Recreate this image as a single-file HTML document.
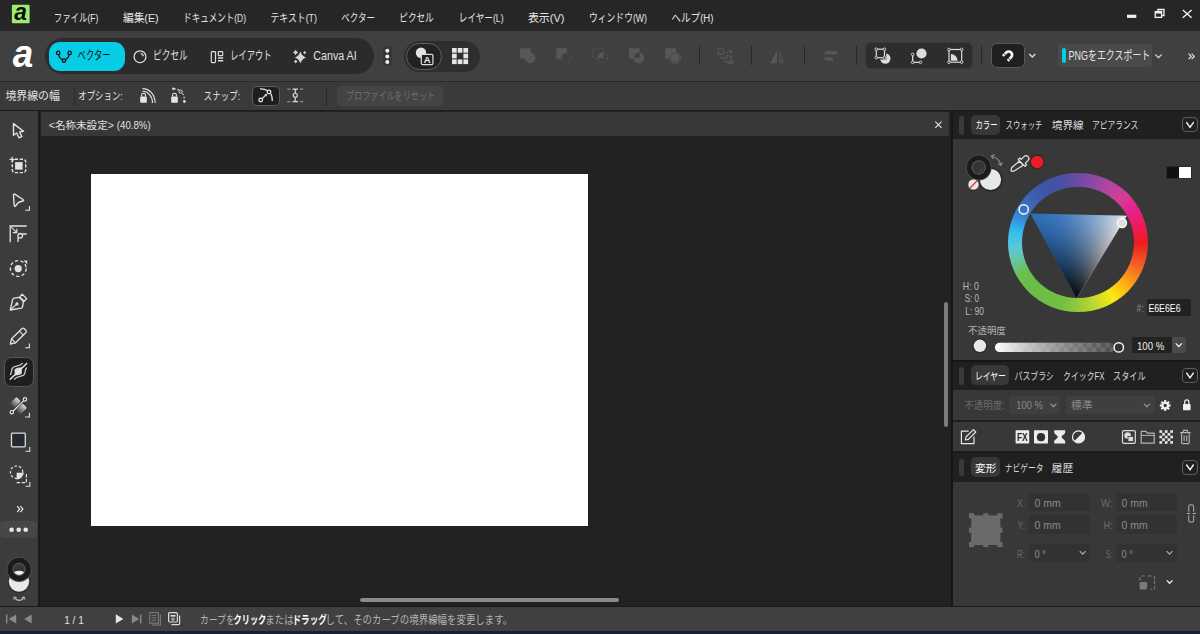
<!DOCTYPE html>
<html lang="ja">
<head>
<meta charset="utf-8">
<title>Affinity</title>
<style>
*{box-sizing:border-box;margin:0;padding:0}
html,body{width:1200px;height:634px;overflow:hidden;background:#222222}
body{position:relative;font-family:"Liberation Sans","Noto Sans CJK JP",sans-serif;font-size:12px;color:#e0e0e0}
.a{position:absolute}
svg{position:absolute;left:0;top:0;overflow:visible}
svg text{font-family:"Liberation Sans","Noto Sans CJK JP",sans-serif;white-space:pre}
#titlebar{left:0;top:0;width:1200px;height:31px;background:#262626}
#toolbar{left:0;top:31px;width:1200px;height:50px;background:#404040}
#tbline{left:0;top:81px;width:1200px;height:1.5px;background:#292929}
#context{left:0;top:82px;width:1200px;height:28px;background:#3a3a3a}
#tools{left:0;top:110.6px;width:38.1px;height:495.4px;background:#3c3c3c}
#doctab{left:40.5px;top:112.2px;width:908.7px;height:23.8px;background:#383838}
#canvas{left:40px;top:136px;width:912px;height:470px;background:#222222}
#page{left:90.8px;top:174.4px;width:496.8px;height:351.2px;background:#ffffff}
#right{left:953.3px;top:110px;width:246.7px;height:496px;background:#383838}
#status{left:0;top:607px;width:1200px;height:23.5px;background:#404040}
#statline{left:0;top:605.5px;width:1200px;height:1.5px;background:#1a1a1a}
#strip{left:0;top:630.5px;width:1200px;height:3.5px;background:#14213d}
.sep{width:1.3px;background:#272727}
.tabbar{left:0;width:246.7px;background:#202020}
.grip{width:4.5px;border-radius:2.5px;background:#3a3a3a}
.tabon{background:#383838;border-radius:5px}
.mbtn{width:15.4px;height:15.2px;border:1.3px solid #5e5e5e;border-radius:4px}
.fld{background:#323232;border-radius:3px}
</style>
</head>
<body>
<div id="titlebar" class="a"></div>
<div id="toolbar" class="a">
  <!-- persona switcher -->
  <div class="a" style="left:45px;top:7px;width:329px;height:36px;border-radius:18px;background:#2b2b2b"></div>
  <div class="a" style="left:48.5px;top:10.8px;width:76px;height:29.2px;border-radius:11px;background:#06cde6"></div>
  <div class="a" style="left:382.5px;top:15px;width:9.5px;height:20px;border-radius:3px;background:#363636"></div>
  <!-- view mode -->
  <div class="a" style="left:404px;top:10px;width:76px;height:30.5px;border-radius:15.5px;background:#2e2e2e"></div>
  <div class="a" style="left:405.7px;top:11.5px;width:36px;height:27.5px;border-radius:13.5px;background:#222222;border:1px solid #626262"></div>
  <!-- separators -->
  <div class="a sep" style="left:698.5px;top:15px;height:19px"></div>
  <div class="a sep" style="left:751px;top:15px;height:19px"></div>
  <div class="a sep" style="left:803.5px;top:15px;height:19px"></div>
  <div class="a sep" style="left:856px;top:15px;height:19px"></div>
  <div class="a sep" style="left:981px;top:15px;height:19px"></div>
  <!-- order group -->
  <div class="a" style="left:864.5px;top:11.3px;width:108.5px;height:26.5px;border-radius:6px;background:#2d2d2d;border:1px solid #3a3a3a"></div>
  <!-- snapping -->
  <div class="a" style="left:990.8px;top:11.6px;width:34px;height:25.8px;border-radius:6px;background:#1f1f1f;border:1px solid #5a5a5a"></div>
  <!-- export -->
  <div class="a" style="left:1058px;top:13.3px;width:93.7px;height:23px;border-radius:4px;background:#4a4a4a"></div>
  <div class="a" style="left:1062px;top:17px;width:3.6px;height:15.3px;border-radius:2px;background:#06cde6"></div>
</div>
<div id="tbline" class="a"></div>
<div id="context" class="a">
  <div class="a sep" style="left:74px;top:4.5px;height:19px;background:#2a2a2a"></div>
  <div class="a" style="left:251.700px;top:4.200px;width:28.100px;height:20.100px;border-radius:5px;background:#1e1e1e;border:1.200px solid #5e5e5e"></div>
  <div class="a sep" style="left:326px;top:4.5px;height:19px;background:#2a2a2a"></div>
  <div class="a" style="left:337.3px;top:4px;width:105.7px;height:20.4px;border-radius:4px;background:#444444"></div>
</div>
<div id="tools" class="a">
  <div class="a" style="left:4.100px;top:246.500px;width:30px;height:30px;border-radius:7.500px;background:#1e1e1e;border:1.300px solid #585858"></div>
  <div class="a" style="left:0;top:410.400px;width:37.300px;height:16.600px;border-radius:4px;background:#474747"></div>
</div>
<div id="doctab" class="a"></div>
<div id="canvas" class="a">
  <div class="a" style="left:903.7px;top:165.5px;width:4.3px;height:125.5px;border-radius:2.2px;background:#7c7c7c"></div>
  <div class="a" style="left:320px;top:462px;width:259.3px;height:4px;border-radius:2px;background:#8a8a8a"></div>
</div>
<div id="page" class="a"></div>
<div id="right" class="a">
  <!-- colour panel -->
  <div class="a tabbar" style="top:0;height:28.5px"></div>
  <div class="a grip" style="left:6px;top:6.4px;height:18.2px"></div>
  <div class="a tabon" style="left:17.9px;top:5px;width:28.8px;height:19.6px"></div>
  <div class="a mbtn" style="left:229px;top:7.200px"></div>
  <div class="a" style="left:212.5px;top:55.6px;width:26.4px;height:13.6px;background:#111111;border:1px solid #2a2a2a"></div>
  <div class="a" style="left:225.5px;top:56.6px;width:12.4px;height:11.6px;background:#ffffff"></div>
  <div class="a" style="left:193.4px;top:189.2px;width:44.1px;height:16.6px;border-radius:2px;background:#222222"></div>
  <div class="a" style="left:178.3px;top:226.7px;width:40px;height:16.3px;border-radius:2px 0 0 2px;background:#222222"></div>
  <div class="a" style="left:218.3px;top:226.7px;width:14.2px;height:16.3px;border-radius:0 2px 2px 0;background:#4a4a4a"></div>
  <div class="a" style="left:0;top:249.800px;width:246.700px;height:2.300px;background:#151515"></div>
  <!-- layers panel -->
  <div class="a tabbar" style="top:252.100px;height:27.700px"></div>
  <div class="a grip" style="left:6px;top:257.4px;height:17.3px"></div>
  <div class="a tabon" style="left:17.8px;top:255.3px;width:37.7px;height:19.7px"></div>
  <div class="a mbtn" style="left:229px;top:257.800px"></div>
  <div class="a fld" style="left:55.9px;top:285.5px;width:51px;height:18.8px;background:#3f3f3f"></div>
  <div class="a fld" style="left:112.8px;top:285.5px;width:88.9px;height:18.8px;background:#3f3f3f"></div>
  <div class="a" style="left:0;top:309.8px;width:246.5px;height:2.2px;background:#1e1e1e"></div>
  <div class="a" style="left:0;top:341.4px;width:246.5px;height:1.8px;background:#1a1a1a"></div>
  <!-- transform panel -->
  <div class="a tabbar" style="top:343px;height:28.6px"></div>
  <div class="a grip" style="left:6px;top:349.3px;height:17.1px"></div>
  <div class="a tabon" style="left:17.8px;top:347.2px;width:28.7px;height:19.6px"></div>
  <div class="a mbtn" style="left:229px;top:349.700px"></div>
  <div class="a fld" style="left:75.3px;top:382.7px;width:61.2px;height:18.5px"></div>
  <div class="a fld" style="left:162.5px;top:382.7px;width:60.8px;height:18.5px"></div>
  <div class="a fld" style="left:75.3px;top:405.3px;width:61.2px;height:18.5px"></div>
  <div class="a fld" style="left:162.5px;top:405.3px;width:60.8px;height:18.5px"></div>
  <div class="a fld" style="left:75.3px;top:433.5px;width:61.2px;height:18.5px"></div>
  <div class="a fld" style="left:162.5px;top:433.5px;width:60.8px;height:18.5px"></div>
</div>
<div class="a" style="left:951.300px;top:110px;width:1.600px;height:496px;background:#161616"></div>
<div class="a" style="left:38.100px;top:110px;width:1.600px;height:496px;background:#1b1b1b"></div>
<div class="a" style="left:0;top:110px;width:1200px;height:0.800px;background:#1c1c1c"></div>
<div id="statline" class="a"></div>
<div id="status" class="a"></div>
<div id="strip" class="a"></div>
<svg id="icons-top" width="1200" height="112" viewBox="0 0 1200 112" fill="none">
  <!-- app logo (title bar) -->
  <rect x="11.9" y="4.7" width="17.7" height="18.5" rx="1" fill="#9cee6e"/>
  <text x="14.300" y="20.400" font-size="24.500" font-weight="bold" font-style="italic" fill="#0a0a0a" textLength="12.600" lengthAdjust="spacingAndGlyphs">a</text>
  <!-- window controls -->
  <rect x="1127" y="14.7" width="9.3" height="3.2" fill="#f0f0f0"/>
  <g stroke="#f0f0f0" stroke-width="1.3">
    <path d="M1158 11.2V9.5h6v6h-1.8"/>
    <rect x="1155.2" y="11.6" width="6.4" height="5.8"/>
    <path d="M1155.2 12.6h6.4" stroke-width="1.8"/>
    <path d="M1182.8 10l8.8 7.8M1191.6 10l-8.8 7.8" stroke-width="1.4"/>
  </g>
  <!-- persona logo -->
  <text x="12.8" y="66.8" font-size="38" font-weight="bold" font-style="italic" fill="#ffffff" textLength="20.5" lengthAdjust="spacingAndGlyphs">a</text>
  <!-- vector persona icon -->
  <g stroke="#101010" stroke-width="1.3">
    <path d="M58.6 54.6c0.6 3 2.6 4.6 4.4 5.2M69.2 54.6c-0.6 3-2.6 4.6-4.4 5.2"/>
    <circle cx="58.2" cy="52.9" r="1.7"/><circle cx="69.6" cy="52.9" r="1.7"/><circle cx="64" cy="60.6" r="1.7"/>
  </g>
  <!-- pixel persona icon -->
  <g stroke="#dcdcdc" stroke-width="1.3">
    <circle cx="140" cy="56.7" r="5.9"/>
    <path d="M140.6 53.6a3 3 0 0 1 2.7 2.7"/>
  </g>
  <!-- layout persona icon -->
  <g stroke="#dcdcdc" stroke-width="1.2">
    <rect x="211.3" y="51.6" width="4.2" height="11" rx="0.8"/>
    <rect x="218.3" y="51.6" width="4.4" height="4" rx="0.6"/>
    <path d="M218 58h5.200M218 60.800h5.200" stroke-width="1.500"/>
  </g>
  <!-- canva AI sparkle -->
  <g fill="#d4d4d4">
    <path d="M300.4 51.50Q301.83 55.87 305.90 57.4Q301.83 58.93 300.4 63.30Q298.97 58.93 294.90 57.4Q298.97 55.87 300.4 51.50z"/>
    <path d="M295.6 49.80Q296.41 51.69 298.30 52.5Q296.41 53.31 295.6 55.20Q294.79 53.31 292.90 52.5Q294.79 51.69 295.6 49.80z"/>
    <path d="M304.7 50.70Q305.27 52.03 306.60 52.6Q305.27 53.17 304.7 54.50Q304.13 53.17 302.80 52.6Q304.13 52.03 304.7 50.70z"/>
    <path d="M295.7 59.50Q296.30 60.90 297.70 61.5Q296.30 62.10 295.7 63.50Q295.10 62.10 293.70 61.5Q295.10 60.90 295.7 59.50z"/>
  </g>
  <!-- more dots -->
  <g fill="#f0f0f0"><circle cx="387.3" cy="50.8" r="2"/><circle cx="387.3" cy="56.5" r="2"/><circle cx="387.3" cy="62.1" r="2"/></g>
  <!-- view mode: vector view -->
  <circle cx="421" cy="52.8" r="5.2" fill="#e2e2e2"/>
  <rect x="421.300" y="54.300" width="11.600" height="10.400" rx="1.200" fill="#222222" stroke="#dcdcdc" stroke-width="1.200"/>
  <text x="423.700" y="62.900" font-size="9" font-weight="bold" fill="#f0f0f0" textLength="6.800" lengthAdjust="spacingAndGlyphs">A</text>
  <!-- view mode: pixel grid -->
  <g fill="#e6e6e6">
    <rect x="452" y="48" width="4.7" height="4.7"/><rect x="457.700" y="48" width="4.700" height="4.700"/><rect x="463.400" y="48" width="4.700" height="4.700"/>
    <rect x="452" y="53.700" width="4.700" height="4.700"/><rect x="463.400" y="53.700" width="4.700" height="4.700"/>
    <rect x="452" y="59.400" width="4.700" height="4.700"/><rect x="457.700" y="59.400" width="4.700" height="4.700"/><rect x="463.400" y="59.400" width="4.700" height="4.700"/>
  </g>
  <!-- boolean ops (disabled) -->
  <g fill="#575757" stroke="none">
    <rect x="520" y="48.300" width="10.800" height="10.400" rx="0.800"/><circle cx="530" cy="57.800" r="5.400"/>
    <rect x="556.300" y="48.300" width="10.800" height="10.400" rx="0.800"/>
    <rect x="628.900" y="48.300" width="10.800" height="10.400" rx="0.800"/><circle cx="638.900" cy="57.800" r="5.400"/>
    <rect x="665.200" y="48.300" width="10.800" height="10.400" rx="0.800"/>
  </g>
  <circle cx="566.300" cy="57.800" r="5" fill="#404040" stroke="#575757" stroke-width="1" stroke-dasharray="2 1.300"/>
  <rect x="593.100" y="48.800" width="9.800" height="9.400" stroke="#575757" stroke-width="1" stroke-dasharray="1.500 1.200"/>
  <circle cx="602.600" cy="57.800" r="5" stroke="#575757" stroke-width="1" stroke-dasharray="2 1.300"/>
  <path d="M597.600 57.800a5 5 0 0 1 5-5h0.800v5z" fill="#575757"/>
  <path d="M633.900 57.800a5 5 0 0 1 5-5h0.800v5z" fill="#404040"/>
  <circle cx="675.200" cy="57.800" r="5" fill="#575757" stroke="#404040" stroke-width="1"/>
  <circle cx="675.200" cy="57.800" r="5.600" stroke="#575757" stroke-width="1"/>
  <!-- arrange (disabled) -->
  <g stroke="#575757" stroke-width="1.100">
    <rect x="718" y="48.800" width="5.600" height="5.600" rx="0.800"/>
    <path d="M725.600 52.300h1.600v5.800h-5.800v-1.600M729.200 55.900h1.600v5.800h-5.800v-1.600"/>
    <path d="M728.800 49.600l2.800 2.800M731.600 49.900v2.500h-2.500"/>
    <path d="M732.800 59.600v3.400h-5.400" stroke-width="1.300"/>
  </g>
  <!-- flip (disabled) -->
  <path d="M777 50.200v13h-6.800z" fill="#575757"/>
  <path d="M778.800 50.200l6.800 13h-6.800z" fill="#4c4c4c"/>
  <!-- align (disabled) -->
  <rect x="825" y="51.300" width="12" height="3.200" rx="0.600" fill="#575757"/><rect x="825" y="57.400" width="8" height="3.200" rx="0.600" fill="#575757"/>
  <path d="M824.300 49.500v13" stroke="#454545" stroke-width="1"/>
  <!-- order group icons -->
  <circle cx="885.3" cy="58.5" r="5.2" fill="#dcdcdc"/>
  <rect x="875.3" y="48.2" width="10.200" height="10.500" fill="#2d2d2d" stroke="#2d2d2d" stroke-width="1.6"/>
  <rect x="876.3" y="49.2" width="8.200" height="8.500" stroke="#dcdcdc" stroke-width="1.200" fill="none"/>
  <g fill="#2d2d2d" stroke="#dcdcdc" stroke-width="0.900">
    <circle cx="876.3" cy="49.200" r="1.300"/><circle cx="884.5" cy="49.200" r="1.300"/><circle cx="876.3" cy="57.7" r="1.300"/><circle cx="884.5" cy="57.7" r="1.300"/>
  </g>
  <path d="M912.7 54.4v7.900h7.800" stroke="#dcdcdc" stroke-width="1.300" fill="none"/>
  <circle cx="921.500" cy="53.500" r="6.100" fill="#2d2d2d"/>
  <circle cx="921.500" cy="53.500" r="5.100" fill="#dcdcdc"/>
  <g fill="#2d2d2d" stroke="#dcdcdc" stroke-width="0.900">
    <circle cx="912.700" cy="54.400" r="1.300"/><circle cx="912.700" cy="62.300" r="1.300"/><circle cx="920.500" cy="62.300" r="1.300"/>
  </g>
  <rect x="949" y="49.500" width="12.700" height="12.700" stroke="#dcdcdc" stroke-width="1.200" fill="none"/>
  <path d="M950.900 60.700v-6.700a6.700 6.700 0 0 1 6.700 6.700z" fill="#dcdcdc"/>
  <g fill="#2d2d2d" stroke="#dcdcdc" stroke-width="0.900">
    <circle cx="949" cy="49.500" r="1.300"/><circle cx="961.700" cy="49.500" r="1.300"/><circle cx="949" cy="62.200" r="1.300"/><circle cx="961.700" cy="62.200" r="1.300"/>
  </g>
  <!-- snapping magnet -->
  <g transform="translate(1008.7 54.900) rotate(45)">
    <path d="M-3.4 4.8V0A3.4 3.4 0 0 1 3.4 0V4.8" stroke="#f4f4f4" stroke-width="2.700" fill="none"/>
    <path d="M-5.200 2.500h3.600M1.600 2.500h3.600" stroke="#1f1f1f" stroke-width="0.900"/>
  </g>
  <path d="M1029.300 54l3 3l3-3" stroke="#dcdcdc" stroke-width="1.300"/>
  <!-- export chevrons -->
  <path d="M1155.400 54.600l3.100 3.100l3.100-3.100" stroke="#dcdcdc" stroke-width="1.300"/>
  <path d="M1188.600 53.600l2.700 2.800l-2.700 2.800M1191.600 53.600l2.700 2.800l-2.700 2.800" stroke="#e6e6e6" stroke-width="1.200"/>
  <!-- context toolbar icons -->
  <g stroke="#e0e0e0" stroke-width="1.100">
    <path d="M142.500 88.600c7 0 12.600 5.800 12.600 14.400M142.500 91.300c5.600 0 10 4.800 10 11.700"/>
  </g>
  <rect x="140.200" y="96.600" width="6.600" height="6.200" rx="0.800" fill="#e6e6e6"/>
  <path d="M141.600 96.600v-1.500a1.900 1.900 0 0 1 3.800 0v1.500" stroke="#e6e6e6" stroke-width="1.100"/>
  <rect x="171.200" y="96.600" width="6.600" height="6.200" rx="0.800" fill="#e6e6e6"/>
  <path d="M172.600 96.600v-1.500a1.900 1.900 0 0 1 3.800 0v1.500" stroke="#e6e6e6" stroke-width="1.100"/>
  <path d="M174 88.800c6 0 10.500 4.800 10.500 12.200" stroke="#e0e0e0" stroke-width="1.100" stroke-dasharray="1.800 1.600"/>
  <circle cx="173.400" cy="88.800" r="1.300" fill="#e0e0e0"/><circle cx="180.600" cy="91.600" r="1.600" fill="#3a3a3a" stroke="#e0e0e0" stroke-width="1"/><circle cx="184.400" cy="101.500" r="1.400" fill="#e0e0e0"/>
  <!-- snap to curve (active) -->
  <g stroke="#e8e8e8" stroke-width="1.300" fill="none">
    <path d="M260 88.900c3-0.200 5.400 0.400 7.200 1.600M270.900 93.800c1 2 1.500 4.400 1.400 7.200"/>
    <circle cx="269" cy="92" r="1.800"/>
    <circle cx="260.750" cy="100" r="1.800"/>
    <path d="M262.200 98.600l4-4" stroke-width="1.200"/>
  </g>
  <path d="M267.100 93.900l-2.800 0.600l2.200 2.200z" fill="#e8e8e8"/>
  <!-- snap spacing icon -->
  <g stroke="#dcdcdc" stroke-width="1.200" fill="none">
    <path d="M292.500 89.100h5.500M292.500 101.700h5.500M295.250 89.100v3.900M295.250 97.500v4.200"/>
    <circle cx="295.250" cy="95.250" r="2"/>
    <path d="M287.250 89.100h3.200M300 89.100h3.200M287.250 101.700h3.200M300 101.700h3.200" stroke="#8e8e8e"/>
  </g>
</svg>
<svg id="icons-tools" width="40" height="634" viewBox="0 0 40 634" fill="none">
  <g stroke="#e2e2e2" stroke-width="1.300" stroke-linejoin="round" stroke-linecap="round">
    <!-- move tool -->
    <path d="M13.500 123.600v11.600l3.100-2.200l2.400 4.800l2.800-1.300l-2.200-4.600l4-0.500z" stroke-width="1.400"/>
    <!-- artboard tool -->
    <rect x="12.300" y="159.200" width="13.400" height="13.400" rx="2.600" stroke-width="1.400" stroke-dasharray="3.200 1.700" stroke-linecap="butt"/>
    <path d="M9.900 159.300h4.400M12.100 157.100v4.400" stroke-width="1.200"/>
    <!-- node tool -->
    <path d="M13.500 195.200q0-1.900 1.600-0.900l7.900 5.200q1.500 1-0.200 1.500l-3.300 1q-0.900 0.300-1.500 1l-2.300 2.800q-1.300 1.500-1.500-0.500z" stroke-width="1.400"/>
    <path d="M25.200 210.200h4.200v-4.200" stroke-width="1.100" stroke-linejoin="miter" stroke-linecap="butt"/>
    <!-- corner tool -->
    <path d="M10.200 242.200v-16.200h16.400" stroke-linejoin="miter" stroke-linecap="butt"/>
    <path d="M11.600 227.400l5 5M16.800 229v3.600h-3.600" stroke-width="1.100"/>
    <circle cx="20.200" cy="235.800" r="2.300"/>
    <path d="M18 237.400v4.600M22.400 234h4.200" stroke-linecap="butt"/>
    <!-- contour tool -->
    <circle cx="18.300" cy="268.500" r="7.900" stroke-width="1.400" stroke-dasharray="3.300 2.300" stroke-linecap="butt"/>
    <!-- pen tool -->
    <path d="M10.300 310l2.300-10.400q0.300-1.200 1.600-1.400l5-0.800l4.200 4.200l-0.800 5q-0.200 1.300-1.400 1.600z"/>
    <path d="M19.700 296.900l2.500-2.600l4.500 4.300l-2.500 2.700z"/>
    <path d="M10.600 309.700l5.800-5.400" stroke-width="1.100"/>
    <circle cx="16.900" cy="303.900" r="0.900" fill="#e2e2e2"/>
    <!-- pencil tool -->
    <g transform="translate(10.300 344) rotate(-44.600)">
      <path d="M0 0l4.600-2.800h14.300a1.800 1.800 0 0 1 1.800 1.800v2a1.800 1.800 0 0 1-1.800 1.800h-14.300z"/>
      <path d="M4.600-2.800v5.600M15.400-2.800v5.600" stroke-width="1.100"/>
    </g>
    <path d="M25.200 347.800h4.200v-4.200" stroke-width="1.100" stroke-linejoin="miter" stroke-linecap="butt"/>
  </g>
  <rect x="15.100" y="162.100" width="7.500" height="7.500" fill="#e2e2e2"/>
  <circle cx="18.200" cy="268.600" r="3.600" fill="#e2e2e2"/>
  <path d="M23.400 260.400h3.800v3.800z" fill="#e2e2e2"/>
  <!-- width tool (selected) -->
  <path d="M14.400 369.600c1.600-1.800 4.400-2 7.300-2.300l0.300 5.600c-1.200 2-4.200 2.200-7.200 2.600z" fill="#d8d8d8"/>
  <g stroke="#cecece" stroke-width="1.300" stroke-linecap="round" fill="none">
    <path d="M10.400 374.500c1.800-1.600 0.400-5.200 2.600-7s6.600-0.800 9.400-4.100"/>
    <path d="M26.400 368.000c-1.800 1.600-0.400 5.200-2.600 7s-6.600 0.800-9.400 4.100"/>
  </g>
  <path d="M10.200 379.300l16.500-15.900" stroke="#ececec" stroke-width="1.400" stroke-linecap="round"/>
  <!-- transparency tool -->
  <defs>
    <linearGradient id="tg1" x1="0" y1="0" x2="1" y2="0"><stop offset="0" stop-color="#e2e2e2" stop-opacity="0.080"/><stop offset="1" stop-color="#e2e2e2" stop-opacity="0.950"/></linearGradient>
  </defs>
  <g transform="translate(18.400 405.600) rotate(-44)">
    <rect x="-4.600" y="-7.600" width="9.200" height="6.200" rx="1.200" fill="url(#tg1)"/>
    <rect x="-4.600" y="1.400" width="9.200" height="6.200" rx="1.200" fill="url(#tg1)"/>
  </g>
  <g stroke="#e2e2e2" stroke-width="1.200">
    <path d="M13 411.200l10.800-10.600"/>
    <circle cx="11.800" cy="412.200" r="1.700" fill="#3c3c3c"/>
    <circle cx="25" cy="399.400" r="1.700" fill="#3c3c3c"/>
    <path d="M25.200 417h4.200v-4.200" stroke-width="1.100"/>
  </g>
  <!-- rectangle tool -->
  <rect x="11.500" y="433.200" width="13.800" height="13.600" rx="0.800" fill="#252a30" stroke="#dcdcdc" stroke-width="1.300"/>
  <path d="M25.600 451.200h4.200v-4.200" stroke="#e2e2e2" stroke-width="1.100"/>
  <!-- shape builder tool -->
  <g stroke="#e2e2e2" stroke-width="1.200">
    <circle cx="16.600" cy="472.200" r="6.200" stroke-dasharray="2.600 1.800"/>
    <path d="M16.600 482.600h9.800v-9.800" stroke-dasharray="3.400 1.600"/>
    <path d="M25.600 486.200h4.200v-4.200" stroke-width="1.100"/>
  </g>
  <path d="M16.600 472.800h7a7 7 0 0 1-7 6.800z" fill="#e2e2e2"/>
  <!-- more -->
  <path d="M17.200 506.200l2.500 2.900l-2.500 2.900M20.400 506.200l2.500 2.900l-2.500 2.900" stroke="#e6e6e6" stroke-width="1.200"/>
  <g fill="#e8e8e8"><circle cx="11.600" cy="529.800" r="2.300"/><circle cx="18.700" cy="529.800" r="2.300"/><circle cx="25.700" cy="529.800" r="2.300"/></g>
  <!-- colour selector -->
  <circle cx="19" cy="581.600" r="11.400" fill="#2c2c2c"/>
  <circle cx="19" cy="581.600" r="10.200" fill="#e8e8e8"/>
  <circle cx="19.100" cy="569.400" r="12.600" fill="#4c4c4c"/>
  <circle cx="19.100" cy="569.400" r="11.600" fill="#1b1b1b"/>
  <circle cx="19.100" cy="569.400" r="6.600" fill="#585858"/>
  <circle cx="19.100" cy="569.400" r="5.600" fill="#363636"/>
  <clipPath id="holeclip"><circle cx="19.100" cy="569.400" r="5.600"/></clipPath>
  <circle cx="19" cy="581.800" r="11" fill="#f0f0f0" clip-path="url(#holeclip)"/>
  <path d="M14.400 597.400c2.600 4 7 4 9.600 0" stroke="#b4b4b4" stroke-width="1.100"/>
  <path d="M13.600 599.600l0.600-2.800l2.600 1M24.800 599.600l-0.600-2.800l-2.600 1" stroke="#b4b4b4" stroke-width="1"/>
</svg>
<!-- colour wheel -->
<div class="a" style="left:1008.3px;top:172.800px;width:139.400px;height:139.400px;border-radius:50%;background:conic-gradient(from 90deg,#ed1c24 0deg,#f04e23 15deg,#f58220 30deg,#fdb913 44deg,#f6ec13 58deg,#c4d92e 74deg,#96c93d 90deg,#72bf44 105deg,#6abd45 135deg,#6abf4b 150deg,#6cc278 157deg,#68c5a2 164deg,#58c8dc 176deg,#30bcf0 191deg,#3590dc 201deg,#3a72c2 211deg,#3d5fae 225deg,#3f54a5 240deg,#4a4fa3 255deg,#6c4ba4 270deg,#8e4aa3 285deg,#b5449e 300deg,#d63c96 315deg,#e5208b 330deg,#eb1b5a 345deg,#ed1c24 360deg)"></div>
<div class="a" style="left:1022.300px;top:186.800px;width:111.400px;height:111.400px;border-radius:50%;background:#383838"></div>
<!-- HSL triangle: hue vertex (30.4,13.5) white vertex (126.9,15.8) black vertex (76.6,98.2) relative to 1000,200 -->
<div class="a" style="left:1000px;top:200px;width:160px;height:110px;clip-path:polygon(30.4px 13.5px,126.9px 15.8px,76.6px 98.2px);background:linear-gradient(181.4deg,rgba(8,8,8,0.000) 14.6px,rgba(8,8,8,0.044) 25.1px,rgba(8,8,8,0.125) 35.5px,rgba(8,8,8,0.230) 46.0px,rgba(8,8,8,0.354) 56.4px,rgba(8,8,8,0.494) 66.9px,rgba(8,8,8,0.650) 77.3px,rgba(8,8,8,0.818) 87.8px,rgba(8,8,8,1.000) 98.2px),conic-gradient(from -58.6deg at 76.6px 98.2px,rgba(236,236,236,0) 0deg,rgba(236,236,236,0.000) 30.0deg,rgba(236,236,236,0.016) 36.6deg,rgba(236,236,236,0.062) 43.9deg,rgba(236,236,236,0.141) 51.8deg,rgba(236,236,236,0.250) 60.0deg,rgba(236,236,236,0.391) 68.2deg,rgba(236,236,236,0.562) 76.1deg,rgba(236,236,236,0.766) 83.4deg,rgba(236,236,236,1.000) 90.0deg,rgba(236,236,236,1) 200deg,rgba(236,236,236,0) 200deg),#2f6fb8"></div>
<svg id="icons-right" width="1200" height="634" viewBox="0 0 1200 634" fill="none">
  <!-- panel menu chevrons -->
  <g stroke="#f0f0f0" stroke-width="1.500" stroke-linecap="round" stroke-linejoin="round">
    <path d="M1186.700 122.600l3.300 4.800l3.300-4.800"/>
    <path d="M1186.700 373.100l3.300 4.800l3.300-4.800"/>
    <path d="M1186.700 465l3.300 4.800l3.300-4.800"/>
  </g>
  <!-- stroke / fill selector -->
  <circle cx="990.500" cy="179.500" r="12.300" fill="#2a2a2a"/>
  <circle cx="990.500" cy="179.500" r="10.600" fill="#e8e8e8"/>
  <circle cx="978.700" cy="167.500" r="13" fill="#4a4a4a"/>
  <circle cx="978.700" cy="167.500" r="12" fill="#1b1b1b"/>
  <circle cx="978.700" cy="167.500" r="7.200" fill="#585858"/>
  <circle cx="978.700" cy="167.500" r="6.200" fill="#343434"/>
  <path d="M979.600 171.600l3-3" stroke="#4c4c4c" stroke-width="1.200"/>
  <circle cx="973.500" cy="184.500" r="5.600" fill="#e8e8e8" stroke="#2c2c2c" stroke-width="0.800"/>
  <path d="M969.800 188.400l7.400-7.800" stroke="#ed1c24" stroke-width="1.300"/>
  <!-- swap arrow -->
  <g stroke="#8e8e8e" stroke-width="1.100">
    <path d="M991.600 156.200c4.800 1 8 4 9.200 8.800"/>
    <path d="M994.400 154.600l-3 1.600l1.800 2.800M1002.400 162.400l-1.600 3l-2.800-1.800"/>
  </g>
  <!-- eyedropper -->
  <g stroke="#e6e6e6" stroke-width="1.200" stroke-linejoin="round">
    <path d="M1019.200 161.200l4 4l-8.600 5.600l-2.800 0.600l-0.800-0.800l0.600-2.800z"/>
    <path d="M1018.200 159.600l6.800 6.800l1.600-1.600l-1.400-1.400l2.800-2.800a2.700 2.700 0 0 0-4-4l-2.800 2.800l-1.400-1.400z" fill="#383838"/>
  </g>
  <circle cx="1037.200" cy="162" r="7.400" fill="#2a2a2a"/>
  <circle cx="1037.200" cy="162" r="6.200" fill="#ed1c24"/>
  <!-- hue marker -->
  <circle cx="1023.700" cy="209.400" r="4.600" stroke="#f4f4f4" stroke-width="1.500"/>
  <circle cx="1122" cy="223" r="4.500" fill="#dedede" stroke="#fafafa" stroke-width="1.400"/>
  <!-- opacity slider -->
  <defs>
    <pattern id="chk" x="995" y="342.800" width="9.200" height="9.200" patternUnits="userSpaceOnUse">
      <rect width="9.200" height="9.200" fill="#4e4e4e"/><rect width="4.600" height="4.600" fill="#8a8a8a"/><rect x="4.600" y="4.600" width="4.600" height="4.600" fill="#8a8a8a"/>
    </pattern>
    <linearGradient id="og" x1="0" y1="0" x2="1" y2="0"><stop offset="0" stop-color="#ffffff"/><stop offset="0.080" stop-color="#f4f4f4" stop-opacity="0.950"/><stop offset="1" stop-color="#4a4a4a" stop-opacity="0.650"/></linearGradient>
  </defs>
  <rect x="995" y="342.800" width="119.500" height="9.200" rx="4.600" fill="url(#chk)"/>
  <rect x="995" y="342.800" width="119.500" height="9.200" rx="4.600" fill="url(#og)"/>
  <circle cx="979.900" cy="345.800" r="7.400" fill="#2c2c2c"/>
  <circle cx="979.900" cy="345.800" r="6.200" fill="#e8e8e8"/>
  <circle cx="1118.800" cy="347.400" r="4.700" fill="#333333" stroke="#f4f4f4" stroke-width="1.500"/>
  <path d="M1175.700 343.400l3.100 3.100l3.100-3.100" stroke="#f4f4f4" stroke-width="1.300"/>
  <!-- layers options -->
  <path d="M1050.600 403.800l2.900 2.900l2.900-2.900M1144 403.800l2.900 2.900l2.900-2.900" stroke="#9a9a9a" stroke-width="1.200"/>
  <g transform="translate(1165.200 405.500)">
    <g fill="#f0f0f0">
      <circle r="3.800"/>
      <rect x="-1.100" y="-5.400" width="2.200" height="10.800"/>
      <rect x="-1.100" y="-5.400" width="2.200" height="10.800" transform="rotate(45)"/>
      <rect x="-1.100" y="-5.400" width="2.200" height="10.800" transform="rotate(90)"/>
      <rect x="-1.100" y="-5.400" width="2.200" height="10.800" transform="rotate(135)"/>
    </g>
    <circle r="1.700" fill="#383838"/>
  </g>
  <rect x="1183" y="404" width="7.600" height="6.200" rx="0.800" fill="#f0f0f0"/>
  <path d="M1184.700 404v-2a2.100 2.100 0 0 1 4.200 0v2" stroke="#f0f0f0" stroke-width="1.200"/>
  <!-- layer buttons row -->
  <g stroke="#e6e6e6" stroke-width="1.200" stroke-linejoin="round">
    <path d="M968.600 431.200h-7.200v12.400h12.600v-7"/>
    <path d="M973.400 429.600l2.400 2.400l-7.400 7.400l-3 0.600l0.600-3z" fill="#383838"/>
  </g>
  <rect x="1015.600" y="430.200" width="13.600" height="13.400" rx="0.800" fill="#ececec"/>
  <text x="1016.900" y="441.200" font-size="11.200" font-weight="bold" fill="#2a2a2a" textLength="10.800" lengthAdjust="spacingAndGlyphs">FX</text>
  <rect x="1034" y="430.200" width="14" height="13.400" rx="0.800" fill="#ececec"/>
  <circle cx="1041" cy="437.200" r="4.100" fill="#2e2e2e"/>
  <path d="M1054.200 430.200h11v2c0 2-3.600 3.200-3.600 4.700s3.600 2.700 3.600 4.700v2h-11v-2c0-2 3.600-3.200 3.600-4.700s-3.600-2.700-3.600-4.700z" fill="#ececec"/>
  <circle cx="1078.500" cy="436.900" r="6" stroke="#ececec" stroke-width="1.200"/>
  <path d="M1082.800 432.600a6 6 0 0 1-8.500 8.500z" fill="#ececec"/>
  <rect x="1122.500" y="430.600" width="12.800" height="12.800" rx="1.400" stroke="#dcdcdc" stroke-width="1.200"/>
  <circle cx="1127.600" cy="435.600" r="3.300" fill="#dcdcdc"/>
  <rect x="1128" y="436.400" width="5.400" height="5" fill="#dcdcdc" stroke="#383838" stroke-width="0.800"/>
  <path d="M1141.200 443.200v-11.800h4.800l1.400 1.800h6.800v10z" stroke="#b4b4b4" stroke-width="1.200" stroke-linejoin="round"/>
  <path d="M1141.200 435.400h13" stroke="#b4b4b4" stroke-width="1"/>
  <g fill="#e2e2e2">
    <rect x="1159.400" y="430.200" width="2.720" height="2.720"/><rect x="1164.840" y="430.200" width="2.720" height="2.720"/><rect x="1170.280" y="430.200" width="2.720" height="2.720"/>
    <rect x="1162.120" y="432.920" width="2.720" height="2.720"/><rect x="1167.560" y="432.920" width="2.720" height="2.720"/>
    <rect x="1159.400" y="435.640" width="2.720" height="2.720"/><rect x="1164.840" y="435.640" width="2.720" height="2.720"/><rect x="1170.280" y="435.640" width="2.720" height="2.720"/>
    <rect x="1162.120" y="438.360" width="2.720" height="2.720"/><rect x="1167.560" y="438.360" width="2.720" height="2.720"/>
    <rect x="1159.400" y="441.080" width="2.720" height="2.720"/><rect x="1164.840" y="441.080" width="2.720" height="2.720"/><rect x="1170.280" y="441.080" width="2.720" height="2.720"/>
  </g>
  <g stroke="#b4b4b4" stroke-width="1.100">
    <path d="M1180.200 432.600h10.400M1183.400 432.400v-2h4v2"/>
    <path d="M1181.600 433.200v9.200a1.200 1.200 0 0 0 1.200 1.200h5.200a1.200 1.200 0 0 0 1.200-1.200v-9.200"/>
    <path d="M1184.100 435.400v5.800M1186.700 435.400v5.800"/>
  </g>
  <!-- transform panel -->
  <g fill="#6a6a6a">
    <rect x="971.200" y="515.400" width="29.200" height="29.600"/>
    <rect x="969" y="513.200" width="5.200" height="5.200"/><rect x="983.200" y="513.200" width="5.200" height="5.200"/><rect x="997.400" y="513.200" width="5.200" height="5.200"/>
    <rect x="969" y="527.600" width="5.200" height="5.200"/><rect x="997.400" y="527.600" width="5.200" height="5.200"/>
    <rect x="969" y="542" width="5.200" height="5.200"/><rect x="983.200" y="542" width="5.200" height="5.200"/><rect x="997.400" y="542" width="5.200" height="5.200"/>
  </g>
  <path d="M1079.800 551.200l2.900 2.900l2.900-2.900M1166.700 551.200l2.900 2.900l2.900-2.900" stroke="#ababab" stroke-width="1.200"/>
  <g stroke="#9c9c9c" stroke-width="1.200">
    <path d="M1188.700 511.700v-5.200a1.700 1.700 0 0 1 1.700-1.700h1.500a1.700 1.700 0 0 1 1.700 1.700v5.200"/>
    <path d="M1188.700 515.300v5.200a1.700 1.700 0 0 0 1.700 1.700h1.500a1.700 1.700 0 0 0 1.700-1.700v-5.200"/>
    <path d="M1186.900 513.500h3.200M1192.700 513.500h3.200" stroke="#b4b4b4" stroke-width="1"/>
  </g>
  <path d="M1148 576h5.400a1.200 1.200 0 0 1 1.200 1.200v10.800a1.200 1.200 0 0 1-1.200 1.200h-3" stroke="#7a7a7a" stroke-width="1.100" stroke-dasharray="3.600 1.600"/>
  <path d="M1140 580.600v-3.400a1.200 1.200 0 0 1 1.200-1.200h3.800" stroke="#7a7a7a" stroke-width="1.100" stroke-dasharray="3.600 1.600"/>
  <rect x="1139.600" y="582" width="7.600" height="7.400" rx="1.400" fill="#7a7a7a"/>
  <path d="M1166.700 580.400l2.900 2.900l2.900-2.900" stroke="#f0f0f0" stroke-width="1.300"/>
  <!-- doc tab close -->
  <path d="M935.300 121.700l6.200 6.200M941.500 121.700l-6.200 6.200" stroke="#e6e6e6" stroke-width="1.100"/>
  <!-- status bar icons -->
  <g fill="#8a8a8a">
    <rect x="6" y="614.400" width="1.400" height="9"/><path d="M16.200 614.400v9l-7.600-4.500z"/>
    <path d="M31.600 614.400v9l-7.400-4.500z"/>
    <path d="M131.800 614.400v9l7.400-4.500z"/><rect x="140" y="614.400" width="1.400" height="9"/>
  </g>
  <path d="M115.800 614.200v9.400l7.600-4.700z" fill="#e6e6e6"/>
  <g stroke="#7a7a7a" stroke-width="1.100">
    <rect x="149.800" y="612.600" width="8.600" height="10.600"/>
    <path d="M160.400 614.600v10.400h-8.600"/>
    <path d="M151.800 615.400h4.600M151.800 617.800h4.600M151.800 620.200h4.600" stroke-width="0.900"/>
  </g>
  <g stroke="#dcdcdc" stroke-width="1.200">
    <rect x="168.600" y="612.600" width="8.800" height="9.400" rx="1.200"/>
    <path d="M179.600 615.400v8a1.200 1.200 0 0 1-1.200 1.200h-7"/>
    <path d="M170.400 615.800h5.200" stroke-width="1.600"/>
    <circle cx="173" cy="619.200" r="1.200" stroke-width="0.900"/>
  </g>
</svg>
<svg id="labels" width="1200" height="634" viewBox="0 0 1200 634">
<text x="53.8" y="21.6" font-size="11.7" fill="#e4e4e4" textLength="44.4" lengthAdjust="spacingAndGlyphs">ファイル(F)</text>
<text x="122.9" y="21.6" font-size="11.7" fill="#e4e4e4" textLength="35.8" lengthAdjust="spacingAndGlyphs">編集(E)</text>
<text x="183.3" y="21.6" font-size="11.7" fill="#e4e4e4" textLength="62.7" lengthAdjust="spacingAndGlyphs">ドキュメント(D)</text>
<text x="270.4" y="21.6" font-size="11.7" fill="#e4e4e4" textLength="46.6" lengthAdjust="spacingAndGlyphs">テキスト(T)</text>
<text x="341.3" y="21.6" font-size="11.7" fill="#e4e4e4" textLength="33.6" lengthAdjust="spacingAndGlyphs">ベクター</text>
<text x="399.3" y="21.6" font-size="11.7" fill="#e4e4e4" textLength="34.4" lengthAdjust="spacingAndGlyphs">ピクセル</text>
<text x="458.8" y="21.6" font-size="11.7" fill="#e4e4e4" textLength="44.7" lengthAdjust="spacingAndGlyphs">レイヤー(L)</text>
<text x="527.9" y="21.6" font-size="11.7" fill="#e4e4e4" textLength="36.5" lengthAdjust="spacingAndGlyphs">表示(V)</text>
<text x="589.1" y="21.6" font-size="11.7" fill="#e4e4e4" textLength="57.9" lengthAdjust="spacingAndGlyphs">ウィンドウ(W)</text>
<text x="671.3" y="21.6" font-size="11.7" fill="#e4e4e4" textLength="42.2" lengthAdjust="spacingAndGlyphs">ヘルプ(H)</text>
<text x="77.6" y="60.2" font-size="12.3" fill="#101010" textLength="33.1" lengthAdjust="spacingAndGlyphs">ベクター</text>
<text x="153.1" y="60.2" font-size="12.3" fill="#e0e0e0" textLength="34.6" lengthAdjust="spacingAndGlyphs">ピクセル</text>
<text x="230.3" y="60.2" font-size="12.3" fill="#e0e0e0" textLength="41.1" lengthAdjust="spacingAndGlyphs">レイアウト</text>
<text x="313.3" y="60.3" font-size="12" fill="#e0e0e0" textLength="43.4" lengthAdjust="spacingAndGlyphs">Canva AI</text>
<text x="1068.6" y="60.3" font-size="12" fill="#e6e6e6" textLength="81.7" lengthAdjust="spacingAndGlyphs">PNGをエクスポート</text>
<text x="5.4" y="100.2" font-size="11" fill="#e4e4e4" textLength="54.5" lengthAdjust="spacingAndGlyphs">境界線の幅</text>
<text x="78.3" y="100.2" font-size="11" fill="#e4e4e4" textLength="44.4" lengthAdjust="spacingAndGlyphs">オプション:</text>
<text x="203.6" y="100.2" font-size="11" fill="#e4e4e4" textLength="36.5" lengthAdjust="spacingAndGlyphs">スナップ:</text>
<text x="346.0" y="100.2" font-size="11" fill="#6e6e6e" textLength="89.1" lengthAdjust="spacingAndGlyphs">プロファイルをリセット</text>
<text x="48.8" y="129.3" font-size="10.5" fill="#e0e0e0" textLength="65.1" lengthAdjust="spacingAndGlyphs">&lt;名称未設定&gt;</text>
<text x="116.8" y="129.3" font-size="10.5" fill="#e0e0e0" textLength="33.8" lengthAdjust="spacingAndGlyphs">(40.8%)</text>
<text x="64.2" y="624" font-size="10.5" fill="#e0e0e0" textLength="19.6" lengthAdjust="spacingAndGlyphs">1 / 1</text>
<text x="200.1" y="623.6" font-size="11.5" fill="#b4b4b4" textLength="34.6" lengthAdjust="spacingAndGlyphs">カーブを</text>
<text x="233.6" y="623.6" font-size="11.5" fill="#ffffff" textLength="32.7" lengthAdjust="spacingAndGlyphs" font-weight="bold">クリック</text>
<text x="265.2" y="623.6" font-size="11.5" fill="#b4b4b4" textLength="28.5" lengthAdjust="spacingAndGlyphs">または</text>
<text x="292.6" y="623.6" font-size="11.5" fill="#ffffff" textLength="34.1" lengthAdjust="spacingAndGlyphs" font-weight="bold">ドラッグ</text>
<text x="325.6" y="623.6" font-size="11.5" fill="#b4b4b4" textLength="186.6" lengthAdjust="spacingAndGlyphs">して、そのカーブの境界線幅を変更します。</text>
<text x="975.4" y="129" font-size="10.5" fill="#ffffff" textLength="22.1" lengthAdjust="spacingAndGlyphs">カラー</text>
<text x="1005.6" y="129" font-size="10.5" fill="#dcdcdc" textLength="36.9" lengthAdjust="spacingAndGlyphs">スウォッチ</text>
<text x="1051.8" y="129" font-size="10.5" fill="#dcdcdc" textLength="31.9" lengthAdjust="spacingAndGlyphs">境界線</text>
<text x="1091.9" y="129" font-size="10.5" fill="#dcdcdc" textLength="46.4" lengthAdjust="spacingAndGlyphs">アピアランス</text>
<text x="962.8" y="290.2" font-size="10.5" fill="#b8b8b8" textLength="16.1" lengthAdjust="spacingAndGlyphs">H: 0</text>
<text x="964.7" y="302.4" font-size="10.5" fill="#b8b8b8" textLength="14.2" lengthAdjust="spacingAndGlyphs">S: 0</text>
<text x="965.2" y="315" font-size="10.5" fill="#b8b8b8" textLength="18.8" lengthAdjust="spacingAndGlyphs">L: 90</text>
<text x="1136.6" y="312" font-size="10.5" fill="#8a8a8a" textLength="7.3" lengthAdjust="spacingAndGlyphs">#:</text>
<text x="1148.4" y="312.4" font-size="10.5" fill="#ffffff" textLength="32.2" lengthAdjust="spacingAndGlyphs">E6E6E6</text>
<text x="968.1" y="333.6" font-size="9.5" fill="#b4b4b4" textLength="37.6" lengthAdjust="spacingAndGlyphs">不透明度</text>
<text x="1137" y="349.8" font-size="10.5" fill="#f0f0f0" textLength="27.3" lengthAdjust="spacingAndGlyphs">100 %</text>
<text x="975.0" y="380.2" font-size="10.5" fill="#ffffff" textLength="30.9" lengthAdjust="spacingAndGlyphs">レイヤー</text>
<text x="1014.6" y="380.2" font-size="10.5" fill="#dcdcdc" textLength="39.1" lengthAdjust="spacingAndGlyphs">パスブラシ</text>
<text x="1063.1" y="380.2" font-size="10.5" fill="#dcdcdc" textLength="41.4" lengthAdjust="spacingAndGlyphs">クイックFX</text>
<text x="1113.1" y="380.2" font-size="10.5" fill="#dcdcdc" textLength="32.4" lengthAdjust="spacingAndGlyphs">スタイル</text>
<text x="964.2" y="409.3" font-size="10" fill="#6c6c6c" textLength="40.7" lengthAdjust="spacingAndGlyphs">不透明度:</text>
<text x="1016.3" y="409.4" font-size="10.5" fill="#8c8c8c" textLength="26.4" lengthAdjust="spacingAndGlyphs">100 %</text>
<text x="1070.9" y="409.3" font-size="10.5" fill="#8c8c8c" textLength="21.5" lengthAdjust="spacingAndGlyphs">標準</text>
<text x="975.0" y="472" font-size="10.5" fill="#ffffff" textLength="21.5" lengthAdjust="spacingAndGlyphs">変形</text>
<text x="1004.8" y="472" font-size="10.5" fill="#dcdcdc" textLength="38.6" lengthAdjust="spacingAndGlyphs">ナビゲータ</text>
<text x="1051.6" y="472" font-size="10.5" fill="#dcdcdc" textLength="21.6" lengthAdjust="spacingAndGlyphs">履歴</text>
<text x="1017" y="506.8" font-size="10.5" fill="#6c6c6c" textLength="8" lengthAdjust="spacingAndGlyphs">X:</text>
<text x="1034.5" y="506.8" font-size="10.5" fill="#8c8c8c" textLength="26.1" lengthAdjust="spacingAndGlyphs">0 mm</text>
<text x="1101" y="506.8" font-size="10.5" fill="#6c6c6c" textLength="11.4" lengthAdjust="spacingAndGlyphs">W:</text>
<text x="1121.5" y="506.8" font-size="10.5" fill="#8c8c8c" textLength="26.3" lengthAdjust="spacingAndGlyphs">0 mm</text>
<text x="1017.5" y="529.3" font-size="10.5" fill="#6c6c6c" textLength="7.5" lengthAdjust="spacingAndGlyphs">Y:</text>
<text x="1034.5" y="529.3" font-size="10.5" fill="#8c8c8c" textLength="26.1" lengthAdjust="spacingAndGlyphs">0 mm</text>
<text x="1103.5" y="529.3" font-size="10.5" fill="#6c6c6c" textLength="8.9" lengthAdjust="spacingAndGlyphs">H:</text>
<text x="1121.5" y="529.3" font-size="10.5" fill="#8c8c8c" textLength="26.3" lengthAdjust="spacingAndGlyphs">0 mm</text>
<text x="1017" y="557.5" font-size="10.5" fill="#6c6c6c" textLength="8" lengthAdjust="spacingAndGlyphs">R:</text>
<text x="1034.5" y="557.5" font-size="10.5" fill="#8c8c8c" textLength="11.5" lengthAdjust="spacingAndGlyphs">0 °</text>
<text x="1105.7" y="557.5" font-size="10.5" fill="#6c6c6c" textLength="6.7" lengthAdjust="spacingAndGlyphs">S:</text>
<text x="1121.5" y="557.5" font-size="10.5" fill="#8c8c8c" textLength="11.5" lengthAdjust="spacingAndGlyphs">0 °</text>
</svg>
</body>
</html>
